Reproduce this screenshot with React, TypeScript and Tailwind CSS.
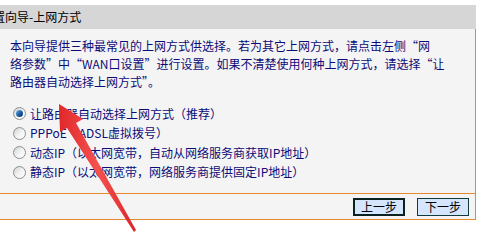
import React from 'react';

// 上网方式选项
const OPTIONS = [
  '让路由器自动选择上网方式（推荐）',
  'PPPoE（ADSL虚拟拨号）',
  '动态IP（以太网宽带，自动从网络服务商获取IP地址）',
  '静态IP（以太网宽带，网络服务商提供固定IP地址）',
];

const FONT = { fontFamily: '"Noto Sans CJK SC", "Noto Sans", sans-serif' };

function Radio({ checked }: { checked: boolean }) {
  return (
    <span className="w-[13px] h-[13px] rounded-full border border-[#8d9090] bg-gradient-to-br from-[#cfd1d1] via-[#f2f2f2] to-white flex items-center justify-center shrink-0">
      {checked && (
        <span className="w-[7px] h-[7px] rounded-full bg-gradient-to-br from-[#7fb6e8] via-[#1d5fa8] to-[#0b2f66]" />
      )}
    </span>
  );
}

function RedArrow() {
  return (
    <svg className="absolute left-0 top-0 pointer-events-none" width="482" height="238" viewBox="0 0 482 238">
      <defs>
        <linearGradient id="ar" x1="0" y1="0" x2="1" y2="0">
          <stop offset="0" stopColor="#e0282a" />
          <stop offset="0.5" stopColor="#f5514f" />
          <stop offset="1" stopColor="#d9262a" />
        </linearGradient>
      </defs>
      <polygon
        points="59,104 83,119 76,123 136,230 134,232 67,128 60,132"
        fill="url(#ar)"
      />
    </svg>
  );
}

export default function App() {
  return (
    <div className="relative w-[482px] h-[238px] bg-white overflow-hidden text-[12px]" style={FONT}>
      <div className="w-[476px] pt-[5px]">
        {/* 标题栏 */}
        <div className="h-[24px] bg-[#d6d6d6] flex items-center overflow-hidden">
          <span className="-ml-[19px] text-black whitespace-nowrap leading-none">设置向导-上网方式</span>
        </div>

        <div className="bg-[#f4f4f4] border-r border-[#e58a2c]">
          {/* 说明 */}
          <div className="h-[164px] pl-[10px] pt-[8px] text-[#0c0c78]">
            <p className="leading-[18px] whitespace-nowrap">
              本向导提供三种最常见的上网方式供选择。若为其它上网方式，请点击左侧“网
              <br />
              络参数”中“WAN口设置”进行设置。如果不清楚使用何种上网方式，请选择“让
              <br />
              路由器自动选择上网方式”。
            </p>

            <div className="mt-[13px] flex flex-col">
              {OPTIONS.map((o, i) => (
                <label key={o} className="h-[19.5px] flex items-center gap-[4px] pl-[3px] whitespace-nowrap">
                  <Radio checked={i === 0} />
                  <span className="leading-none">{o}</span>
                </label>
              ))}
            </div>
          </div>

          {/* 按钮 */}
          <div className="h-[27px] border-y border-[#e58a2c] flex items-center justify-end gap-[12px] pr-[6px]">
            <button className="w-[52px] h-[18px] border-2 border-[#0a2222] bg-[#d5e5fb] text-black leading-none flex items-center justify-center">
              上一步
            </button>
            <button className="w-[52px] h-[18px] border border-[#0f3b3b] bg-[#d5e5fb] text-black leading-none flex items-center justify-center">
              下一步
            </button>
          </div>
        </div>
      </div>
      <RedArrow />
    </div>
  );
}
